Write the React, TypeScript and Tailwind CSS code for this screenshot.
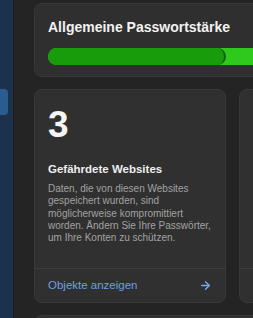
import { ArrowRight } from 'lucide-react'

interface RiskCardProps {
  count: number
  title: string
  text: string
}

function RiskCard({ count, title, text }: RiskCardProps) {
  return (
    <div className="flex h-[214px] w-[192px] shrink-0 flex-col rounded-[8px] border border-[#383838] bg-[#303030]">
      <div className="flex-1 pl-[13px] pr-[10px] pt-[15px]">
        <div className="text-[37px] font-bold leading-[40px] text-[#f5f5f5]">{count}</div>
        <div className="mt-[17px] text-[11.5px] font-bold leading-[14px] text-[#eeeeee]">{title}</div>
        <p className="mt-[7px] text-[10px] leading-[12.3px] text-[#a2a2a2]">{text}</p>
      </div>
      <div className="flex h-[34px] items-center justify-between border-t border-[#3d3d3d] pl-[13px] pr-[13px]">
        <span className="text-[11.5px] text-[#6d9fe6]">Objekte anzeigen</span>
        <ArrowRight size={13} strokeWidth={2.5} className="text-[#7aa8e8]" />
      </div>
    </div>
  )
}

export default function App() {
  return (
    <div className="flex h-[318px] w-[253px] overflow-hidden bg-[#242424] font-['Liberation_Sans',Arial,sans-serif]">
      {/* sidebar */}
      <div className="relative h-full w-[14px] shrink-0 border-r border-[#1a1a1a] bg-[#1c324c]">
        <div className="absolute left-0 top-[89px] h-[26px] w-[8px] rounded-r-[4px] bg-[#2a5c90]" />
      </div>

      <div className="flex w-[420px] shrink-0 flex-col gap-[12px] pl-[20px] pt-[3px]">
        {/* overall strength */}
        <div className="h-[74px] w-[420px] shrink-0 rounded-[8px] border border-[#383838] bg-[#2f2f2f] pl-[13px] pt-[15px]">
          <div className="text-[14px] font-bold leading-[16px] text-[#f2f2f2]">Allgemeine Passwortstärke</div>
          <div className="mt-[13px] flex h-[17px] w-[400px] overflow-hidden rounded-full bg-[#2fc81c]">
            <div className="h-full w-[178px] rounded-full border-r-2 border-[#0f5f08] bg-[#199c0c]" />
          </div>
        </div>

        <div className="flex shrink-0 gap-[13px]">
          <RiskCard
            count={3}
            title="Gefährdete Websites"
            text="Daten, die von diesen Websites gespeichert wurden, sind möglicherweise kompromittiert worden. Ändern Sie Ihre Passwörter, um Ihre Konten zu schützen."
          />
          <RiskCard
            count={12}
            title="Wiederverwendete Passwörter"
            text="Verwenden Sie für jedes Konto ein eigenes Passwort, damit Ihre anderen Konten geschützt bleiben."
          />
        </div>

        <div className="h-[60px] w-[420px] shrink-0 rounded-[8px] border border-[#383838] bg-[#303030]" />
      </div>
    </div>
  )
}
